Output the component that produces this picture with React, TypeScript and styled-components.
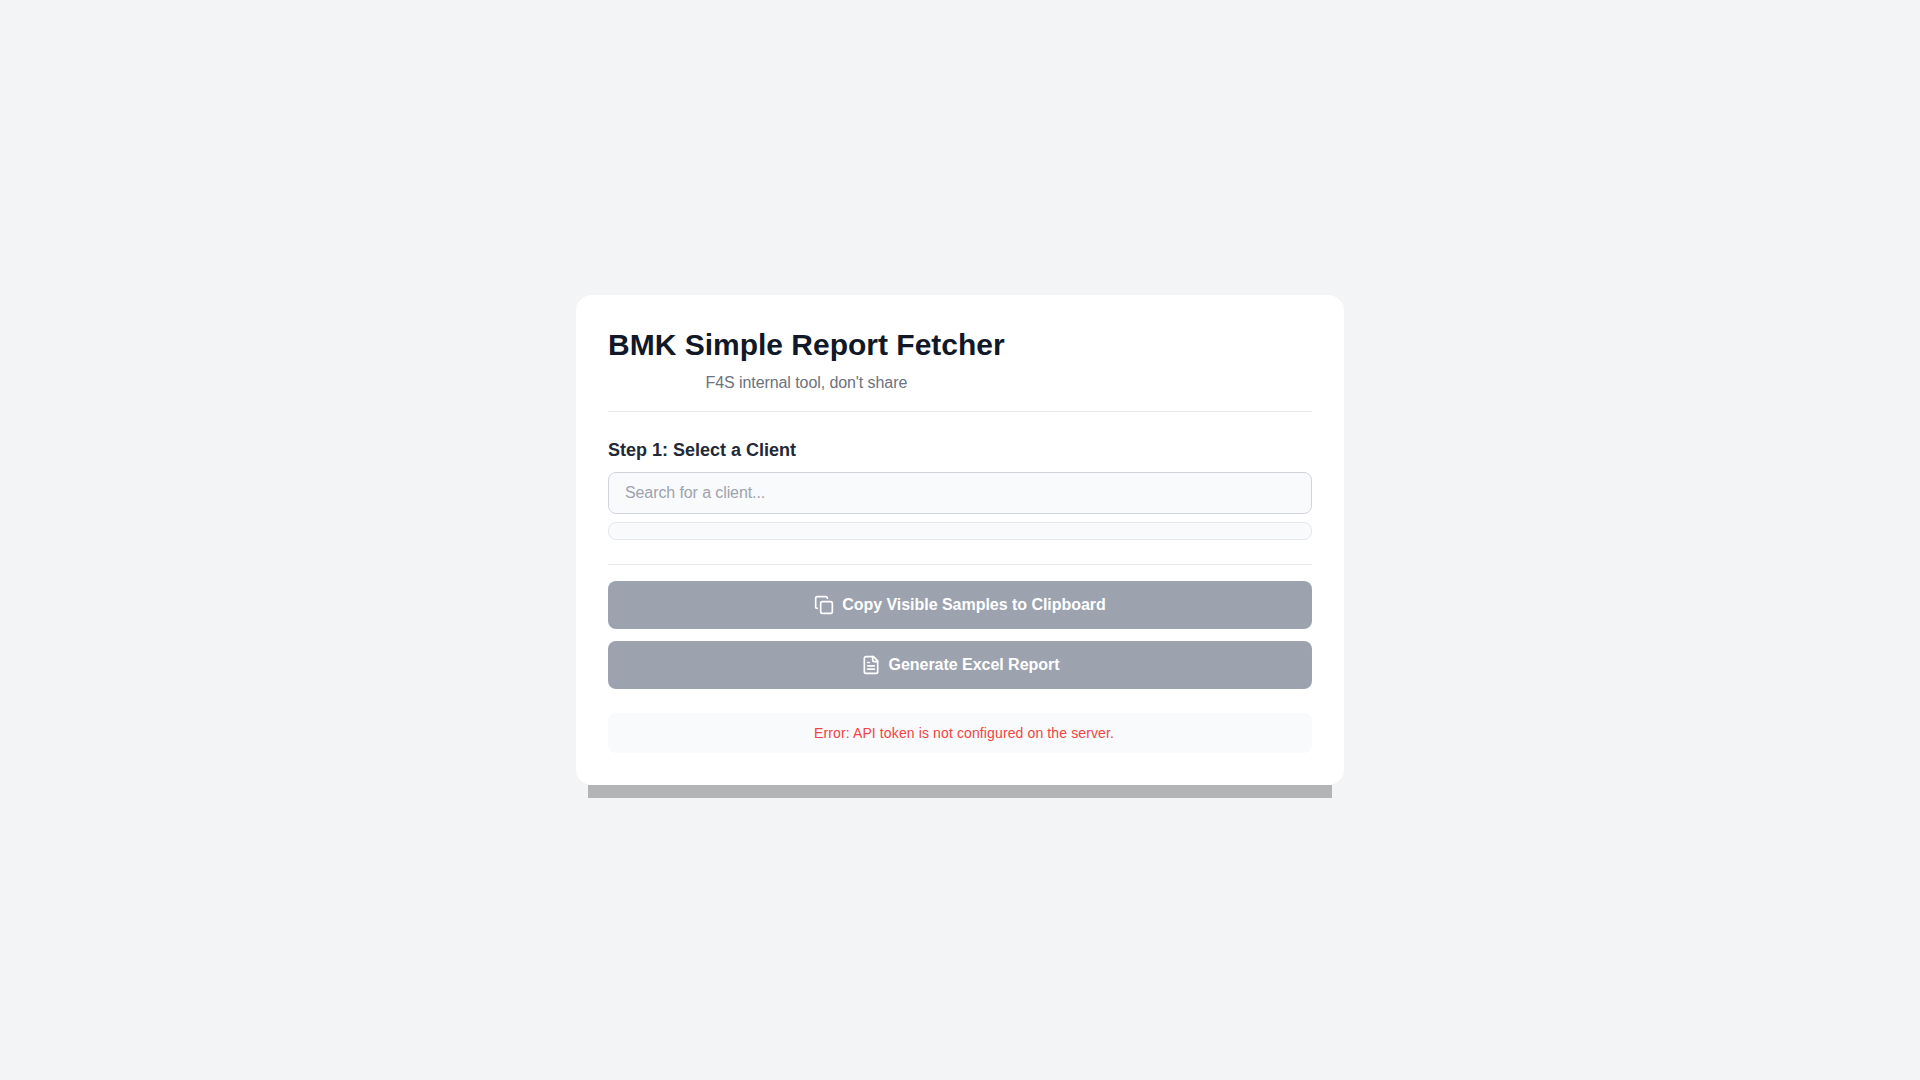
import React from 'react';
import styled, { createGlobalStyle } from 'styled-components';

const GlobalStyle = createGlobalStyle`
  html, body {
    margin: 0;
    padding: 0;
  }
  body {
    background: #f3f4f6;
    font-family: Arial, 'Liberation Sans', sans-serif;
  }
  * {
    box-sizing: border-box;
  }
`;

const Page = styled.div`
  min-height: 100vh;
  display: flex;
  align-items: center;
  justify-content: center;
`;

const Card = styled.div`
  position: relative;
  width: 768px;
  padding: 32px;
  background: #fff;
  border-radius: 16px;

  /* hard-edged shadow strip under the card */
  &::after {
    content: '';
    position: absolute;
    left: 12px;
    right: 12px;
    top: 100%;
    height: 13px;
    background: #b3b4b6;
  }
`;

const Header = styled.header`
  padding-bottom: 16px;
  margin-bottom: 24px;
  border-bottom: 1px solid #e5e7eb;
`;

const HeaderText = styled.div`
  display: inline-block;
  text-align: center;
`;

const Title = styled.h1`
  margin: 0;
  font-size: 30px;
  line-height: 36px;
  font-weight: 700;
  color: #111827;
`;

const Subtitle = styled.p`
  margin: 8px 0 0;
  font-size: 16px;
  line-height: 24px;
  letter-spacing: -0.08px;
  color: #6b7280;
`;

const Section = styled.section`
  padding-bottom: 24px;
  margin-bottom: 16px;
  border-bottom: 1px solid #e5e7eb;
`;

const StepTitle = styled.h2`
  margin: 0 0 8px;
  font-size: 18px;
  line-height: 28px;
  font-weight: 600;
  color: #1f2937;
`;

const SearchInput = styled.input`
  display: block;
  width: 100%;
  height: 42px;
  padding: 8px 16px;
  font-family: inherit;
  font-size: 16px;
  letter-spacing: -0.1px;
  color: #111827;
  background: #f9fafb;
  border: 1px solid #d1d5db;
  border-radius: 8px;
  outline: none;

  &::placeholder {
    color: #9ca3af;
  }
`;

const ClientList = styled.div`
  height: 18px;
  margin-top: 8px;
  background: #f9fafb;
  border: 1px solid #e5e7eb;
  border-radius: 8px;
`;

const Actions = styled.div`
  display: flex;
  flex-direction: column;
  gap: 12px;
`;

const ActionButton = styled.button`
  display: flex;
  align-items: center;
  justify-content: center;
  gap: 8px;
  width: 100%;
  height: 48px;
  padding: 0;
  font-family: inherit;
  font-size: 16px;
  font-weight: 700;
  letter-spacing: -0.03px;
  color: #fff;
  background: #9ca3af;
  border: none;
  border-radius: 8px;
`;

const StatusBox = styled.div`
  height: 40px;
  margin-top: 24px;
  padding-left: 8px;
  display: flex;
  align-items: center;
  justify-content: center;
  font-size: 14px;
  letter-spacing: 0.12px;
  color: #ef4444;
  background: #f9fafb;
  border-radius: 8px;
`;

const Icon = styled.svg`
  width: 20px;
  height: 20px;
  fill: none;
  stroke: currentColor;
  stroke-width: 2;
  stroke-linecap: round;
  stroke-linejoin: round;
`;

const CopyIcon = () => (
  <Icon viewBox="0 0 24 24">
    <rect x="8" y="8" width="14" height="14" rx="2" ry="2" />
    <path d="M4 16c-1.1 0-2-.9-2-2V4c0-1.1.9-2 2-2h10c1.1 0 2 .9 2 2" />
  </Icon>
);

const FileIcon = () => (
  <Icon viewBox="0 0 24 24">
    <path d="M15 2H6a2 2 0 0 0-2 2v16a2 2 0 0 0 2 2h12a2 2 0 0 0 2-2V7Z" />
    <path d="M14 2v4a2 2 0 0 0 2 2h4" />
    <path d="M16 13H8" />
    <path d="M16 17H8" />
    <path d="M10 9H8" />
  </Icon>
);

const App: React.FC = () => {
  return (
    <Page>
      <GlobalStyle />
      <Card>
        <Header>
          <HeaderText>
            <Title>BMK Simple Report Fetcher</Title>
            <Subtitle>F4S internal tool, don't share</Subtitle>
          </HeaderText>
        </Header>
        <Section>
          <StepTitle>Step 1: Select a Client</StepTitle>
          <SearchInput type="text" placeholder="Search for a client..." />
          <ClientList />
        </Section>
        <Actions>
          <ActionButton disabled>
            <CopyIcon />
            Copy Visible Samples to Clipboard
          </ActionButton>
          <ActionButton disabled>
            <FileIcon />
            Generate Excel Report
          </ActionButton>
        </Actions>
        <StatusBox>Error: API token is not configured on the server.</StatusBox>
      </Card>
    </Page>
  );
};

export default App;
